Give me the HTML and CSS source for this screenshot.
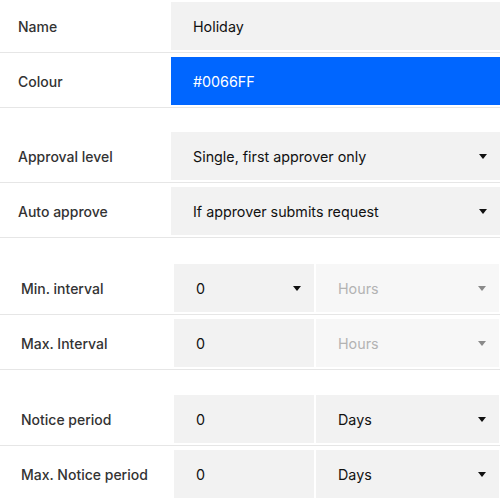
FILE: index.html
```html
<!DOCTYPE html>
<html>
<head>
<meta charset="utf-8">
<link rel="stylesheet" href="styles.css">
</head>
<body>
<div class="form">
  <div class="section top">
    <div class="row">
      <div class="label">Name</div>
      <div class="field text">Holiday</div>
    </div>
    <div class="row">
      <div class="label">Colour</div>
      <div class="field colour">#0066FF</div>
    </div>
  </div>
  <div class="section top gap-s">
    <div class="row">
      <div class="label">Approval level</div>
      <div class="field select"><span>Single, first approver only</span><i class="caret"></i></div>
    </div>
    <div class="row">
      <div class="label">Auto approve</div>
      <div class="field select"><span>If approver submits request</span><i class="caret"></i></div>
    </div>
  </div>
  <div class="section bottom gap-l">
    <div class="row">
      <div class="label">Min. interval</div>
      <div class="field select num"><span>0</span><i class="caret"></i></div>
      <div class="field select unit disabled"><span>Hours</span><i class="caret"></i></div>
    </div>
    <div class="row">
      <div class="label">Max. Interval</div>
      <div class="field text num">0</div>
      <div class="field select unit disabled"><span>Hours</span><i class="caret"></i></div>
    </div>
  </div>
  <div class="section bottom gap-m">
    <div class="row">
      <div class="label">Notice period</div>
      <div class="field text num">0</div>
      <div class="field select unit"><span>Days</span><i class="caret"></i></div>
    </div>
    <div class="row">
      <div class="label">Max. Notice period</div>
      <div class="field text num">0</div>
      <div class="field select unit"><span>Days</span><i class="caret"></i></div>
    </div>
  </div>
</div>
</body>
</html>
```

FILE: styles.css
```css
html, body {
  margin: 0;
  padding: 0;
  background: #ffffff;
}

body {
  font-family: "Inter", "Liberation Sans", sans-serif;
  font-size: 14.3px;
  color: #111111;
  overflow: hidden;
}

.form {
  margin-top: -2px;
  display: flex;
  flex-direction: column;
}

.section {
  display: flex;
  flex-direction: column;
}

.gap-s {
  margin-top: 20px;
}

.gap-m {
  margin-top: 21px;
}

.gap-l {
  margin-top: 22px;
}

.row {
  display: flex;
  align-items: flex-start;
  height: 55px;
  padding-top: 4px;
  box-sizing: border-box;
  border-bottom: 1px solid #e6e6e6;
}

.bottom .row {
  gap: 2px;
}

.label {
  flex: none;
  height: 48px;
  display: flex;
  align-items: center;
  font-size: 14px;
  font-weight: 500;
  color: #333333;
  box-sizing: content-box;
}

.top .label {
  width: 153px;
  padding-left: 18px;
}

.bottom .label {
  width: 151px;
  padding-left: 21px;
}

.field {
  height: 48px;
  box-sizing: border-box;
  display: flex;
  align-items: center;
  padding-left: 22px;
  background: #f2f2f2;
  color: #111111;
}

.top .field {
  flex: 1;
}

.colour {
  background: #0066ff;
  color: #ffffff;
}

.select {
  justify-content: space-between;
  padding-right: 13px;
}

.num {
  width: 140px;
  flex: none;
}

.unit {
  flex: 1;
  margin-right: 1px;
}

.disabled {
  background: #f7f7f7;
  color: #b3b3b3;
}

.caret {
  display: block;
  width: 0;
  height: 0;
  border-left: 4px solid transparent;
  border-right: 4px solid transparent;
  border-top: 5px solid #111111;
}

.disabled .caret {
  border-top-color: #8a8a8a;
}
```
